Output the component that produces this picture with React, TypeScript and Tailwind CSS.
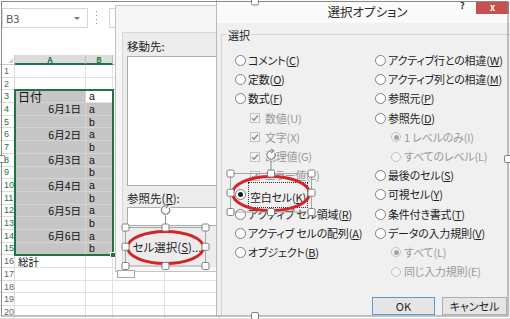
import React from "react";

const F = "[font-family:'Noto_Sans_CJK_JP','Noto_Sans',sans-serif] [font-feature-settings:'palt']";

type Item = {
  t: string;
  k: string;
  kind: "radio" | "check" | "subradio";
  disabled?: boolean;
  checked?: boolean;
  focus?: boolean;
};

const leftItems: Item[] = [
  { t: "コメント", k: "C", kind: "radio" },
  { t: "定数", k: "O", kind: "radio" },
  { t: "数式", k: "F", kind: "radio" },
  { t: "数値", k: "U", kind: "check", disabled: true, checked: true },
  { t: "文字", k: "X", kind: "check", disabled: true, checked: true },
  { t: "論理値", k: "G", kind: "check", disabled: true, checked: true },
  { t: "エラー値", k: "E", kind: "check", disabled: true, checked: true },
  { t: "空白セル", k: "K", kind: "radio", checked: true, focus: true },
  { t: "アクティブ セル領域", k: "R", kind: "radio" },
  { t: "アクティブ セルの配列", k: "A", kind: "radio" },
  { t: "オブジェクト", k: "B", kind: "radio" },
];

const rightItems: Item[] = [
  { t: "アクティブ行との相違", k: "W", kind: "radio" },
  { t: "アクティブ列との相違", k: "M", kind: "radio" },
  { t: "参照元", k: "P", kind: "radio" },
  { t: "参照先", k: "D", kind: "radio" },
  { t: "1 レベルのみ", k: "I", kind: "subradio", disabled: true, checked: true },
  { t: "すべてのレベル", k: "L", kind: "subradio", disabled: true },
  { t: "最後のセル", k: "S", kind: "radio" },
  { t: "可視セル", k: "Y", kind: "radio" },
  { t: "条件付き書式", k: "T", kind: "radio" },
  { t: "データの入力規則", k: "V", kind: "radio" },
  { t: "すべて", k: "L", kind: "subradio", disabled: true, checked: true },
  { t: "同じ入力規則", k: "E", kind: "subradio", disabled: true },
];

function Radio({ checked, disabled, small }: { checked?: boolean; disabled?: boolean; small?: boolean }) {
  return (
    <span
      className={`flex shrink-0 items-center justify-center rounded-full border ${
        small ? "h-[10px] w-[10px]" : "h-[11px] w-[11px]"
      } ${disabled ? "border-[#c2c2c2] bg-[#f4f4f4]" : "border-[#808080] bg-white"}`}
    >
      {checked && <span className={`h-[5px] w-[5px] rounded-full ${disabled ? "bg-[#a3a3a3]" : "bg-[#1a1a1a]"}`} />}
    </span>
  );
}

function Check() {
  return (
    <span className="flex h-[10px] w-[10px] shrink-0 items-center justify-center border border-[#c2c2c2] bg-[#f4f4f4]">
      <svg width="8" height="8" viewBox="0 0 8 8">
        <path d="M1 4.2 L3 6.2 L7 1.5" fill="none" stroke="#8c8c8c" strokeWidth="1.4" />
      </svg>
    </span>
  );
}

function Option({ it }: { it: Item }) {
  const color = it.disabled ? "text-[#9a9a9a]" : "text-[#1e1e1e]";
  const label = (
    <span className={`${color} whitespace-nowrap text-[11px] leading-[13px] tracking-[-0.2px]`}>
      {it.t}(
      {it.disabled ? it.k : <span className="underline underline-offset-[1px]">{it.k}</span>})
    </span>
  );
  return (
    <div
      className={`flex h-[19.2px] items-center ${
        it.kind === "check" ? "gap-[5px] pl-[15px]" : it.kind === "subradio" ? "gap-[3px] pl-[16px]" : "gap-[2px]"
      }`}
    >
      {it.kind === "check" ? <Check /> : <Radio checked={it.checked} disabled={it.disabled} small={it.kind === "subradio"} />}
      {it.focus ? <span className="border border-dotted border-[#333] px-[1px]">{label}</span> : label}
    </div>
  );
}

type Row = { a?: string; aAlign?: "l" | "r"; aBig?: boolean; b?: string };

const rowData: Record<number, Row> = {
  3: { a: "日付", aAlign: "l", aBig: true, b: "a" },
  4: { a: "6月1日", aAlign: "r", b: "a" },
  5: { b: "b" },
  6: { a: "6月2日", aAlign: "r", b: "a" },
  7: { b: "b" },
  8: { a: "6月3日", aAlign: "r", b: "a" },
  9: { b: "b" },
  10: { a: "6月4日", aAlign: "r", b: "a" },
  11: { b: "b" },
  12: { a: "6月5日", aAlign: "r", b: "a" },
  13: { b: "b" },
  14: { a: "6月6日", aAlign: "r", b: "a" },
  15: { b: "b" },
  16: { a: "総計", aAlign: "l" },
};

function Sheet() {
  const rows = Array.from({ length: 20 }, (_, i) => i + 1);
  return (
    <div className="flex flex-col bg-white">
      <div className="flex h-[55px] items-start pt-[8px]">
        <div className="ml-[2px] flex h-[20px] w-[86px] items-center justify-between border border-[#d6d6d6] bg-white pl-[3px] pr-[7px]">
          <span className="text-[11px] leading-[12px] text-[#555]">B3</span>
          <span className="h-0 w-0 border-l-[3px] border-r-[3px] border-t-[3px] border-l-transparent border-r-transparent border-t-[#777]" />
        </div>
        <div className="ml-[8px] mt-[3px] flex flex-col gap-[3px]">
          <span className="h-[1px] w-[1px] bg-[#999]" />
          <span className="h-[1px] w-[1px] bg-[#999]" />
          <span className="h-[1px] w-[1px] bg-[#999]" />
          <span className="h-[1px] w-[1px] bg-[#999]" />
        </div>
        <div className="ml-[12px] h-[20px] w-[40px] border border-[#d6d6d6] bg-white" />
      </div>
      <div className="flex h-[10px] text-[8px] font-bold leading-[9px]">
        <div className="relative w-[15px] border-b border-r border-[#c9c9c9] bg-white">
          <span className="absolute bottom-[1px] right-[1px] h-0 w-0 border-b-[5px] border-l-[5px] border-b-[#d0d0d0] border-l-transparent" />
        </div>
        <div className="flex w-[71px] items-start justify-center border-b-2 border-r border-b-[#217346] border-r-[#bdbdbd] bg-[#dcdcdc] text-[#217346]">A</div>
        <div className="flex w-[27px] items-start justify-center border-b-2 border-r border-b-[#217346] border-r-[#bdbdbd] bg-[#dcdcdc] text-[#217346]">B</div>
        <div className="w-[52px] border-b border-r border-[#c9c9c9] bg-[#f3f3f3]" />
        <div className="flex-1 border-b border-[#c9c9c9] bg-[#f3f3f3]" />
      </div>
      {rows.map((r) => {
        const d = rowData[r] || {};
        const sel = r >= 3 && r <= 15;
        return (
          <div key={r} className="flex h-[12.7px]">
            <div
              className={`flex w-[15px] items-center border-b border-r border-[#dadada] pl-[4px] text-[9px] leading-[10px] [font-family:'Liberation_Sans',sans-serif] ${
                sel ? "text-[#217346]" : "text-[#666]"
              }`}
            >
              {r}
            </div>
            <div
              className={`flex w-[71px] items-center border-b border-r ${
                sel ? "border-[#d4d4d4] bg-[#c6c6c6]" : "border-[#e2e2e2] bg-white"
              } ${d.aAlign === "r" ? "justify-end pr-[4px]" : "justify-start pl-[3px]"}`}
            >
              {d.a && (
                <span className={`${d.aBig ? "text-[12px] leading-[11px]" : "text-[10.5px] leading-[11px]"} text-[#111]`}>{d.a}</span>
              )}
            </div>
            <div
              className={`flex w-[27px] items-center border-b border-r pl-[3px] ${
                sel && r !== 3 ? "border-[#d4d4d4] bg-[#c6c6c6]" : "border-[#e2e2e2] bg-white"
              }`}
            >
              {d.b && (
                <span className="text-[10.5px] leading-[10px] text-[#111] [font-family:'Liberation_Sans',sans-serif]">{d.b}</span>
              )}
            </div>
            <div className="w-[52px] border-b border-r border-[#e2e2e2]" />
            <div className="w-[55px] border-b border-r border-[#e2e2e2]" />
            <div className="flex-1 border-b border-[#e2e2e2]" />
          </div>
        );
      })}
    </div>
  );
}

function GoToDialog() {
  return (
    <div className="absolute left-[115px] top-[5px] flex h-[267px] w-[106px] flex-col border border-[#c3c3c3] bg-[#f6f6f6]">
      <div className="mb-[4px] ml-[6px] mt-[26px] flex flex-1 flex-col border-l border-t border-[#d6d6d6] bg-[#ececec] pl-[4px] pt-[6px] text-[#1e1e1e]">
        <div className="text-[11.5px] leading-[14px]">移動先:</div>
        <div className="mt-[3px] h-[130px] border border-[#acacac] bg-white" />
        <div className="mt-[5px] text-[11.5px] leading-[14px]">
          参照先(<span className="underline underline-offset-[1px]">R</span>):
        </div>
        <div className="mt-[2px] h-[19px] border border-[#acacac] bg-white" />
        <div className="ml-[2px] mt-[6px] flex h-[30px] w-[76px] items-center justify-center text-[11.5px] leading-[14px]">
          セル選択(<span className="underline underline-offset-[1px]">S</span>)...
        </div>
      </div>
    </div>
  );
}

function OptionsDialog() {
  return (
    <div className="absolute left-[216px] top-0 flex h-[316px] w-[294px] flex-col overflow-hidden border-l border-[#b9b9b9] bg-[#f0f0f0]">
      <div className="relative h-[23px] shrink-0 bg-[#fafafa]">
        <div className="pl-[8px] pt-[4px] text-center text-[12.5px] leading-[15px] text-[#2b2b2b]">選択オプション</div>
        <span className="absolute left-[243px] top-[1px] text-[9px] font-bold leading-[10px] text-[#333]">?</span>
        <span className="absolute left-[259px] top-[2px] flex h-[12px] w-[33px] items-center justify-center bg-[#c75050] text-[9px] font-bold leading-[10px] text-white">
          x
        </span>
      </div>
      <div className="flex flex-1 flex-col pl-[4px] pt-[11px]">
        <div className="relative flex flex-1 flex-col border-l border-t border-[#d5d5d5] pl-[13px] pt-[16px]">
          <span className="absolute left-[5px] top-[-7px] bg-[#f0f0f0] px-[1px] text-[11px] leading-[14px] text-[#1e1e1e]">選択</span>
          <div className="grid grid-cols-[140px_1fr]">
            <div className="flex flex-col">
              {leftItems.map((it, i) => (
                <Option key={i} it={it} />
              ))}
            </div>
            <div className="flex flex-col">
              {rightItems.map((it, i) => (
                <Option key={i} it={it} />
              ))}
            </div>
          </div>
          <div className="mt-auto flex justify-end gap-[7px] pb-[1px] pr-[3px]">
            <div className="flex h-[18px] w-[63px] items-center justify-center border border-[#5b9bd5] bg-[#e5e5e5] text-[11px] leading-[12px] text-[#1e1e1e]">
              OK
            </div>
            <div className="flex h-[18px] w-[65px] items-center justify-center border border-[#adadad] bg-[#e5e5e5] text-[11px] leading-[12px] text-[#1e1e1e]">
              キャンセル
            </div>
          </div>
        </div>
      </div>
    </div>
  );
}

function Handle({ x, y }: { x: number; y: number }) {
  return <rect x={x - 3.5} y={y - 3.5} width={7} height={7} rx={1.5} fill="#fff" stroke="#808080" strokeWidth={1} />;
}

function Rotate({ x, y }: { x: number; y: number }) {
  return (
    <g transform={`translate(${x} ${y})`}>
      <circle r={5.5} fill="#fff" />
      <path d="M 3.6 -2.2 A 4.2 4.2 0 1 1 0.8 -4.1" fill="none" stroke="#7f7f7f" strokeWidth={1.2} />
      <path d="M 0.2 -6.2 L 2.8 -4 L 0.2 -2" fill="none" stroke="#7f7f7f" strokeWidth={1.1} />
    </g>
  );
}

function Selected({ x, y, w, h, rot }: { x: number; y: number; w: number; h: number; rot: number }) {
  const xs = [x, x + w / 2, x + w];
  const ys = [y, y + h / 2, y + h];
  const pts: [number, number][] = [];
  xs.forEach((px) => ys.forEach((py) => { if (!(px === xs[1] && py === ys[1])) pts.push([px, py]); }));
  return (
    <g>
      <rect x={x} y={y} width={w} height={h} fill="none" stroke="#a6a6a6" strokeWidth={1} />
      <line x1={xs[1]} y1={rot + 5} x2={xs[1]} y2={y} stroke="#8c8c8c" strokeWidth={1} />
      <Rotate x={xs[1]} y={rot} />
      {pts.map(([px, py], i) => (
        <Handle key={i} x={px} y={py} />
      ))}
    </g>
  );
}

export default function App() {
  return (
    <div className={`relative h-[319px] w-[510px] overflow-hidden bg-white ${F}`}>
      <Sheet />
      <div className="absolute left-[14px] top-[89px] h-[167px] w-[100px] border-2 border-[#217346]" />
      <div className="absolute left-[110px] top-[252px] h-[6px] w-[6px] border border-white bg-[#217346]" />
      <GoToDialog />
      <div className="absolute left-[117px] top-[270px] h-[8px] w-[18px] border border-[#a8a8a8] bg-white" />
      <OptionsDialog />
      <svg className="pointer-events-none absolute left-0 top-0" width="510" height="319">
        <ellipse cx={165.5} cy={247.5} rx={38} ry={16} fill="none" stroke="#d42428" strokeWidth={3} />
        <ellipse cx={271} cy={193.5} rx={38.5} ry={17} fill="none" stroke="#d42428" strokeWidth={3} />
        <Selected x={125.5} y={227.5} w={80} h={38.5} rot={210} />
        <Selected x={230.5} y={173.5} w={81} h={38.5} rot={155} />
        <rect x={1.5} y={1.5} width={506.5} height={314.5} fill="none" stroke="#8a8a8a" strokeWidth={1} />
        <Handle x={255} y={1.5} />
        <Handle x={1.5} y={159} />
        <Handle x={508} y={159} />
        <Handle x={255} y={316} />
      </svg>
    </div>
  );
}
